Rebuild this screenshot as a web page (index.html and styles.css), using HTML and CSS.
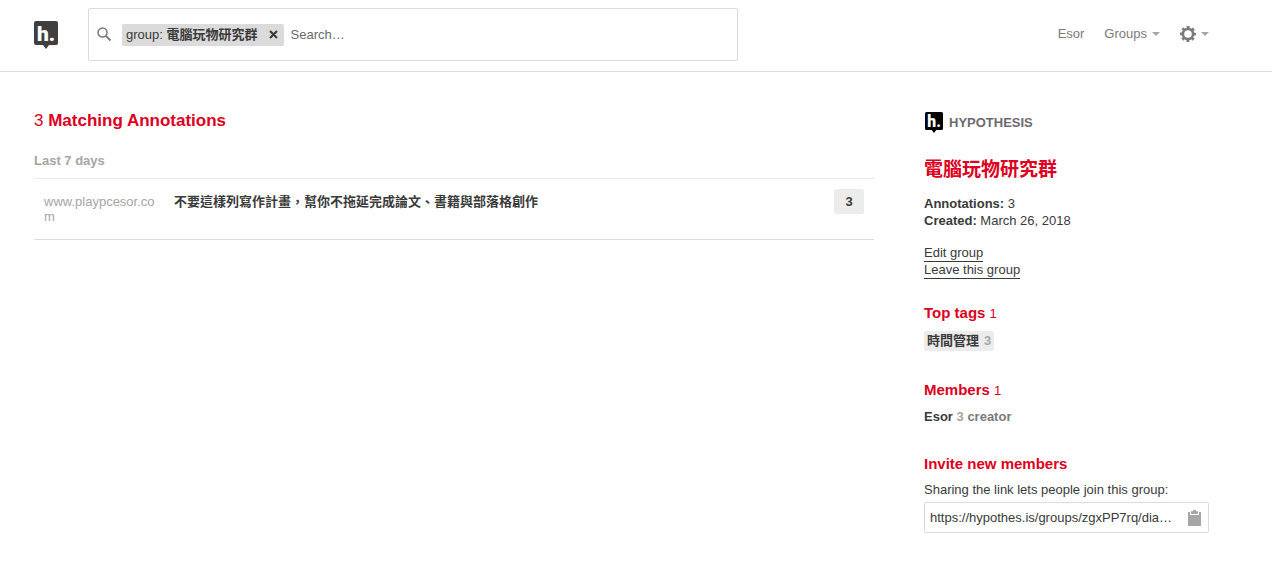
FILE: index.html
```html
<!DOCTYPE html>
<html lang="en">
<head>
<meta charset="utf-8">
<title>電腦玩物研究群</title>
<link rel="stylesheet" href="styles.css">
</head>
<body>
<header class="nav-bar">
  <a class="nav-bar__logo" href="#" aria-label="Hypothesis homepage">
    <svg class="logo" width="24" height="28" viewBox="0 0 24 28" aria-hidden="true">
      <path d="M2 0h20a2 2 0 0 1 2 2v20a2 2 0 0 1-2 2h-7l-3 4-3-4H2a2 2 0 0 1-2-2V2a2 2 0 0 1 2-2z" fill="currentColor"/>
      <text class="logo__text" x="3" y="20">h.</text>
    </svg>
  </a>
  <form class="search">
    <svg class="search__icon" width="15" height="15" viewBox="0 0 15 15" fill="none" stroke="currentColor" aria-hidden="true">
      <circle cx="5.5" cy="5.5" r="4.5" stroke-width="1.5"/>
      <path d="M8.8 8.8l4.7 4.7" stroke-width="1.9"/>
    </svg>
    <span class="lozenge">
      <span>group: <b class="lozenge__value">電腦玩物研究群</b></span>
      <button class="lozenge__close" type="button" aria-label="Remove search term">
        <svg width="9" height="9" viewBox="0 0 9 9" aria-hidden="true"><path d="M1 1l7 7M8 1L1 8" stroke="currentColor" stroke-width="2.1"/></svg>
      </button>
    </span>
    <input class="search__input" type="text" placeholder="Search…" aria-label="Search">
  </form>
  <nav class="menu">
    <a class="menu__item" href="#">Esor</a>
    <button class="menu__item" type="button">Groups <i class="caret"></i></button>
    <button class="menu__item menu__item--settings" type="button" aria-label="Settings">
      <svg width="16" height="16" viewBox="0 0 16 16" fill="none" stroke="currentColor" aria-hidden="true">
        <circle cx="8" cy="8" r="5.1" stroke-width="2.6"/>
        <circle cx="8" cy="8" r="7" stroke-width="2" stroke-dasharray="2.9 2.598" stroke-dashoffset="1.45"/>
      </svg>
      <i class="caret"></i>
    </button>
  </nav>
</header>
<div class="content">
  <main class="results">
    <h1 class="results__title"><span class="count">3</span> Matching Annotations</h1>
    <h2 class="results__period">Last 7 days</h2>
    <ol class="buckets">
      <li class="bucket">
        <a class="bucket__domain" href="#">www.playpcesor.com</a>
        <a class="bucket__title" href="#">不要這樣列寫作計畫，幫你不拖延完成論文、書籍與部落格創作</a>
        <span class="bucket__count">3</span>
      </li>
    </ol>
  </main>
  <aside class="sidebar">
    <div class="brand">
      <svg class="logo logo--dark" width="18" height="21" viewBox="0 0 24 28" aria-hidden="true">
        <path d="M2 0h20a2 2 0 0 1 2 2v20a2 2 0 0 1-2 2h-7l-3 4-3-4H2a2 2 0 0 1-2-2V2a2 2 0 0 1 2-2z" fill="currentColor"/>
        <text class="logo__text" x="3" y="20">h.</text>
      </svg>
      <span>HYPOTHESIS</span>
    </div>
    <h2 class="group-name">電腦玩物研究群</h2>
    <p class="facts"><b>Annotations:</b> 3<br><b>Created:</b> March 26, 2018</p>
    <div class="actions">
      <a class="action" href="#">Edit group</a>
      <a class="action" href="#">Leave this group</a>
    </div>
    <section class="panel">
      <h3 class="panel__title">Top tags <span class="panel__count">1</span></h3>
      <a class="tag" href="#"><span>時間管理</span><span class="tag__count">3</span></a>
    </section>
    <section class="panel">
      <h3 class="panel__title">Members <span class="panel__count">1</span></h3>
      <p class="member">Esor <span class="member__count">3</span> <span class="member__role">creator</span></p>
    </section>
    <section class="panel">
      <h3 class="panel__title">Invite new members</h3>
      <label class="share-label" for="share">Sharing the link lets people join this group:</label>
      <div class="share">
        <input class="share__input" id="share" type="text" readonly value="https://hypothes.is/groups/zgxPP7rq/dian-nao-wan-wu">
        <button class="share__copy" type="button" aria-label="Copy link">
          <svg width="13" height="16" viewBox="0 0 13 16" fill="currentColor" aria-hidden="true">
            <path d="M0 2h2v3h9V2h2v14H0z"/>
            <path d="M3 1.3h2V0h3v1.3h2V4H3z"/>
          </svg>
        </button>
      </div>
    </section>
  </aside>
</div>
</body>
</html>
```
FILE: styles.css
```css
* { box-sizing: border-box; }

body {
  margin: 0;
  background: #fff;
  color: #3a3a3a;
  font: 13px/17px "Liberation Sans", "Noto Sans CJK TC", sans-serif;
}

h1, h2, h3, p, ol { margin: 0; padding: 0; }
a { color: inherit; text-decoration: none; }
button, input { margin: 0; padding: 0; border: 0; background: none; color: inherit; font: inherit; }
svg { display: block; flex: none; }

.nav-bar {
  display: flex;
  align-items: center;
  padding: 8px 63px 10px 34px;
  border-bottom: 1px solid #dbdbdb;
}
.nav-bar__logo { margin-right: 30px; color: #3f3f3f; }
.logo__text { font: 900 21px Roboto, sans-serif; fill: #fff; }
.logo--dark { color: #000; }

.search {
  display: flex;
  align-items: center;
  flex: 0 1 650px;
  height: 53px;
  padding: 0 8px;
  border: 1px solid #dbdbdb;
  border-radius: 2px;
}
.search__icon { margin-right: 10px; color: #7a7a7a; }
.lozenge {
  display: flex;
  align-items: center;
  flex: none;
  height: 22px;
  padding: 0 6px 0 4px;
  border-radius: 2px;
  background: #dbdbdb;
}
.lozenge__value { font-weight: bold; }
.lozenge__close { margin-left: 11px; }
.search__input { flex: 1; min-width: 0; margin-left: 7px; outline: 0; }
.search__input::placeholder { color: #6a6a6a; opacity: 1; }

.menu { display: flex; align-items: center; gap: 20px; margin-left: auto; padding-bottom: 2px; color: #7a7a7a; }
.menu__item { display: flex; align-items: center; gap: 5px; }
.caret { border: 4px solid transparent; border-top-color: #a6a6a6; border-bottom: 0; }

.content {
  display: flex;
  gap: 50px;
  padding: 39px 63px 34px 34px;
}
.results { flex: 1; min-width: 0; }
.results__title { font-size: 17px; line-height: 20px; }
.count { font-weight: normal; }
.results__title, .group-name, .panel__title { color: #dd0021; }
.results__period { margin-top: 21px; color: #a6a6a6; font-size: 13px; line-height: 17px; }
.buckets { margin-top: 9px; border-top: 1px solid #ececec; list-style: none; }
.bucket {
  display: flex;
  align-items: flex-start;
  padding: 10px 10px 15px;
  border-bottom: 1px solid #dbdbdb;
}
.bucket__domain {
  width: 115px;
  margin: 5px 15px 0 0;
  color: #a6a6a6;
  line-height: 15px;
  overflow-wrap: anywhere;
}
.bucket__title { flex: 1; margin-top: 4px; font-weight: bold; }
.bucket__count {
  width: 30px;
  border-radius: 2px;
  background: #ececec;
  font-weight: bold;
  line-height: 25px;
  text-align: center;
}

.sidebar { flex: 0 0 285px; }
.brand { display: flex; align-items: center; gap: 6px; padding: 1px 1px 0; color: #6e6a72; font-weight: bold; }
.group-name { margin-top: 22px; font-size: 19px; line-height: 29px; font-weight: bold; }
.facts { margin-top: 11px; }
.actions { display: flex; flex-direction: column; align-items: flex-start; margin-top: 16px; }
.action { height: 17px; border-bottom: 1px solid #3a3a3a; line-height: 16px; }
.panel { margin-top: 29px; }
.actions + .panel { margin-top: 24px; }
.panel__title { font-size: 15px; line-height: 20px; }
.panel__count { font-size: 13px; font-weight: normal; }
.tag {
  display: flex;
  gap: 5px;
  width: fit-content;
  height: 20px;
  margin-top: 7px;
  padding: 0 3px;
  border-radius: 2px;
  background: #ececec;
  line-height: 20px;
  font-weight: bold;
}
.tag__count { color: #a6a6a6; }
.member { margin-top: 7px; font-weight: bold; }
.member__count { color: #a6a6a6; }
.member__role { color: #7a7a7a; }
.share-label { display: block; margin-top: 7px; }
.share {
  display: flex;
  align-items: center;
  height: 31px;
  margin-top: 4px;
  padding: 0 7px 0 5px;
  border: 1px solid #dbdbdb;
  border-radius: 2px;
}
.share__input { flex: 1; min-width: 0; text-overflow: ellipsis; }
.share__copy { margin-left: 10px; color: #a6a6a6; }
```
